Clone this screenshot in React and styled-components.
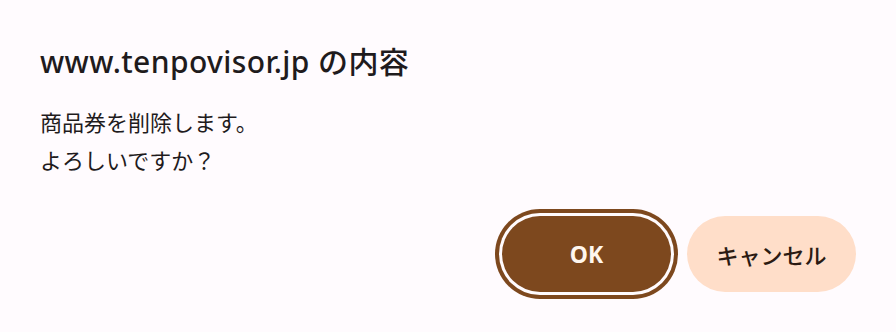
import styled, { createGlobalStyle } from 'styled-components';

const GlobalStyle = createGlobalStyle`
  html, body {
    margin: 0;
    padding: 0;
    background: #fffbfe;
  }
  body {
    font-family: "Noto Sans", "Noto Sans CJK JP", sans-serif;
    color: #1f1b1d;
  }
`;

// ダイアログ
const Dialog = styled.div`
  width: 896px;
  height: 332px;
  box-sizing: border-box;
  padding: 43px 40px 0 40px;
  display: flex;
  flex-direction: column;
  background: #fffbfe;
`;
const Title = styled.h1`
  margin: 0;
  font-size: 30px;
  font-weight: 500;
  line-height: 38px;
  letter-spacing: 0.4px;
`;
const Message = styled.p`
  margin: 21px 0 0 0;
  font-size: 22px;
  line-height: 38px;
  font-family: "Noto Sans CJK JP", sans-serif;
`;

// ボタン
const Actions = styled.div`
  margin-top: 38px;
  display: flex;
  justify-content: flex-end;
  gap: 16px;
`;
const Button = styled.button`
  width: 169px;
  height: 76px;
  border: none;
  border-radius: 38px;
  padding: 0;
  background-color: ${p => p.$bg};
  color: ${p => p.$color};
  font-family: "Noto Sans", "Noto Sans CJK JP", sans-serif;
  font-size: ${p => p.$size};
  font-weight: ${p => p.$weight};
  cursor: pointer;
  box-shadow: ${p => (p.$focused ? `0 0 0 3px #fffbfe, 0 0 0 7px ${p.$bg}` : 'none')};
`;

const App = () => {
  return (
    <>
      <GlobalStyle />
      <Dialog>
        <Title>www.tenpovisor.jp の内容</Title>
        <Message>
          商品券を削除します。
          <br />
          よろしいですか？
        </Message>
        <Actions>
          <Button $bg='#7d481e' $color='#fff6ee' $size='23px' $weight={700} $focused>
            OK
          </Button>
          <Button $bg='#ffdec9' $color='#2b1a12' $size='22px' $weight={500}>
            キャンセル
          </Button>
        </Actions>
      </Dialog>
    </>
  );
};

export default App;
